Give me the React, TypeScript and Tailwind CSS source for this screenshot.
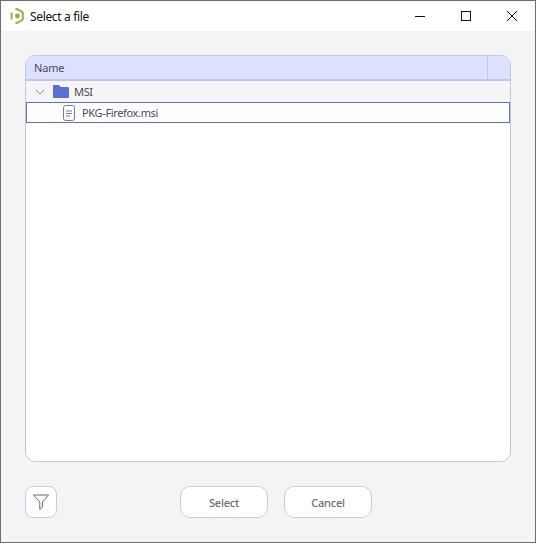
const font = "font-['Noto_Sans','Open_Sans',sans-serif]";

function Logo() {
  return (
    <svg width="14" height="16" viewBox="0 0 14 16" fill="none">
      <path d="M5.5 1.6 L7 0.9 L12.8 4.3 V11.7 L7 15.1 L5.5 14.3" stroke="#8db33f" strokeWidth="1.9" />
      <path d="M1.6 4.6 V11.4" stroke="#9cc04f" strokeWidth="2.2" />
      <circle cx="7.4" cy="8" r="2.4" fill="#8db33f" />
    </svg>
  );
}

function WindowButtons() {
  return (
    <div className="flex items-center h-full">
      <div className="w-[46px] h-full flex items-center justify-center">
        <svg width="10" height="10" viewBox="0 0 10 10" stroke="#111" fill="none"><path d="M0 5.5 H10" /></svg>
      </div>
      <div className="w-[46px] h-full flex items-center justify-center">
        <svg width="10" height="10" viewBox="0 0 10 10" stroke="#111" fill="none"><rect x="0.5" y="0.5" width="9" height="9" /></svg>
      </div>
      <div className="w-[46px] h-full flex items-center justify-center">
        <svg width="10" height="10" viewBox="0 0 10 10" stroke="#111" fill="none"><path d="M0 0 L10 10 M10 0 L0 10" /></svg>
      </div>
    </div>
  );
}

export default function App() {
  return (
    <div className={`w-[536px] h-[543px] flex flex-col border border-[#6e6e6e] bg-[#f4f4f4] ${font}`}>
      <div className="h-[30px] bg-white flex items-center justify-between shrink-0">
        <div className="flex items-center pl-[9px] gap-[6px]">
          <Logo />
          <span className="text-[12px] tracking-[-0.35px] text-[#111] pt-px">Select a file</span>
        </div>
        <WindowButtons />
      </div>

      <div className="flex-1 flex flex-col px-6 pt-6 pb-6">
        <div className="h-[407px] w-[486px] flex flex-col rounded-[10px] border border-[#c5c7e2] bg-white overflow-hidden">
          <div className="h-[25px] shrink-0 flex bg-[#dde0ff] border-b-2 border-[#c5c7e2]">
            <div className="flex-1 flex items-center pl-2 pt-[2px] text-[11px] tracking-[-0.2px] text-[#4a4a55]">Name</div>
            <div className="w-[23px] border-l border-[#c5c7e2]" />
          </div>
          <div className="h-[21px] shrink-0 flex items-center bg-[#f5f5f5]">
            <svg className="ml-[9px]" width="10" height="10" viewBox="0 0 10 10" fill="none" stroke="#8a8a94">
              <path d="M1 3 L5 7 L9 3" />
            </svg>
            <svg className="ml-[8px]" width="16" height="13" viewBox="0 0 16 13" fill="#5a6fd8">
              <path d="M0 1 Q0 0 1 0 H6 L7.5 2 H15 Q16 2 16 3 V12 Q16 13 15 13 H1 Q0 13 0 12 Z" />
            </svg>
            <span className="ml-[5px] pt-[2px] text-[11px] tracking-[-0.35px] text-[#4a4a55]">MSI</span>
          </div>
          <div className="h-[21px] shrink-0 flex items-center border border-[#5a6fd8] bg-white">
            <svg className="ml-[36px]" width="12" height="16" viewBox="0 0 12 16" fill="none" stroke="#6f76b8">
              <rect x="0.5" y="0.5" width="11" height="15" rx="2" />
              <path d="M3 6 H9 M3 8.5 H9 M3 11 H7" strokeWidth="1.2" />
            </svg>
            <span className="ml-[7px] pt-[2px] text-[11px] tracking-[-0.35px] text-[#4a4a55]">PKG-Firefox.msi</span>
          </div>
        </div>

        <div className="relative flex justify-center gap-4 mt-6 pl-4">
          <button className="absolute left-0 top-0 w-8 h-8 flex items-center justify-center rounded-[8px] border border-[#c9cbe4] bg-white">
            <svg width="16" height="16" viewBox="0 0 16 16" fill="none" stroke="#6b6b78">
              <path d="M0.5 1 H15.5 L9.5 8 V13 L6.8 15.5 V8 Z" />
            </svg>
          </button>
          <button className="w-[88px] h-8 pt-[2px] rounded-[10px] border border-[#c9cbe4] bg-white text-[11px] tracking-[-0.2px] font-medium text-[#6b6b78]">Select</button>
          <button className="w-[88px] h-8 pt-[2px] rounded-[10px] border border-[#c9cbe4] bg-white text-[11px] tracking-[-0.2px] font-medium text-[#6b6b78]">Cancel</button>
        </div>
      </div>
    </div>
  );
}
